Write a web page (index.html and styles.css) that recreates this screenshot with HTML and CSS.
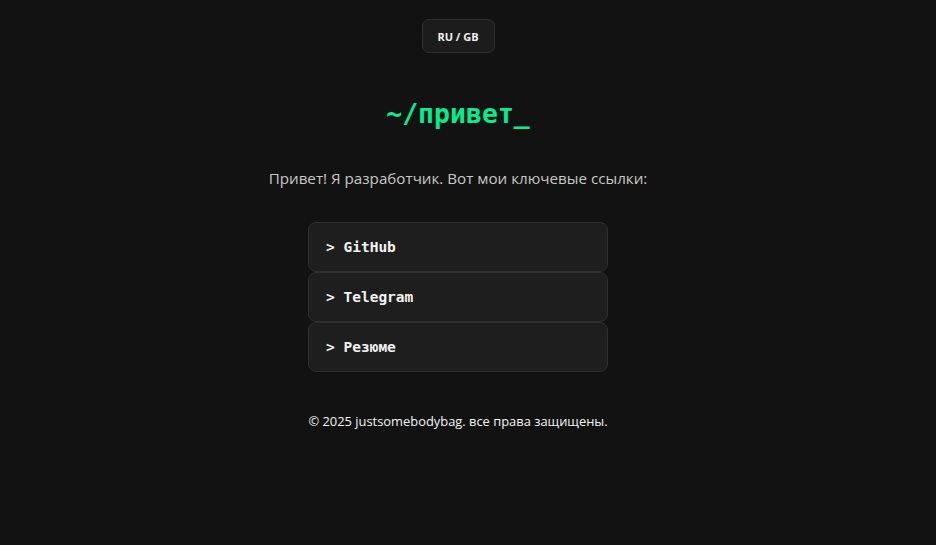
FILE: index.html
```html
<!DOCTYPE html>
<html lang="ru">
<head>
<meta charset="utf-8">
<title>~/привет_</title>
<link rel="stylesheet" href="styles.css">
</head>
<body>
<main class="page">
  <button class="lang-toggle"><span>RU</span> / <span>GB</span></button>
  <h1 class="title">~/привет_</h1>
  <p class="intro">Привет! Я разработчик. Вот мои ключевые ссылки:</p>
  <nav class="links">
    <a class="link" href="#">&gt; GitHub</a>
    <a class="link" href="#">&gt; Telegram</a>
    <a class="link" href="#">&gt; Резюме</a>
  </nav>
  <footer class="footer">© 2025 justsomebodybag. все права защищены.</footer>
</main>
</body>
</html>
```
FILE: styles.css
```css
html, body {
  margin: 0;
  padding: 0;
  background: #121212;
  color: #e6e6e6;
  font-family: "Open Sans", "Noto Sans", sans-serif;
}

.page {
  display: flex;
  flex-direction: column;
  align-items: center;
  padding: 19px 20px 0 0;
}

.lang-toggle {
  background: #1c1c1c;
  border: 1px solid #2e2e2e;
  border-radius: 7px;
  color: #f0f0f0;
  font-family: "Open Sans", sans-serif;
  font-weight: 700;
  font-size: 11px;
  height: 34px;
  width: 73px;
  padding: 0;
  cursor: pointer;
}

.title {
  margin: 44px 0 0;
  font-family: "DejaVu Sans Mono", monospace;
  font-size: 26.5px;
  font-weight: 700;
  color: #00ee90;
  line-height: 34px;
}

.intro {
  margin: 36px 0 0;
  font-size: 15.2px;
  color: #c8c8c8;
  line-height: 22px;
}

.links {
  margin-top: 33px;
  display: flex;
  flex-direction: column;
  width: 300px;
}

.link {
  display: flex;
  align-items: center;
  height: 48px;
  padding: 0 17px;
  background: #1e1e1e;
  border: 1px solid #2f2f2f;
  border-radius: 8px;
  color: #f2f2f2;
  text-decoration: none;
  font-family: "DejaVu Sans Mono", monospace;
  font-weight: 700;
  font-size: 14.5px;
}

.footer {
  margin-top: 39px;
  font-size: 12.9px;
  color: #f4f4f4;
  line-height: 20px;
}
```
